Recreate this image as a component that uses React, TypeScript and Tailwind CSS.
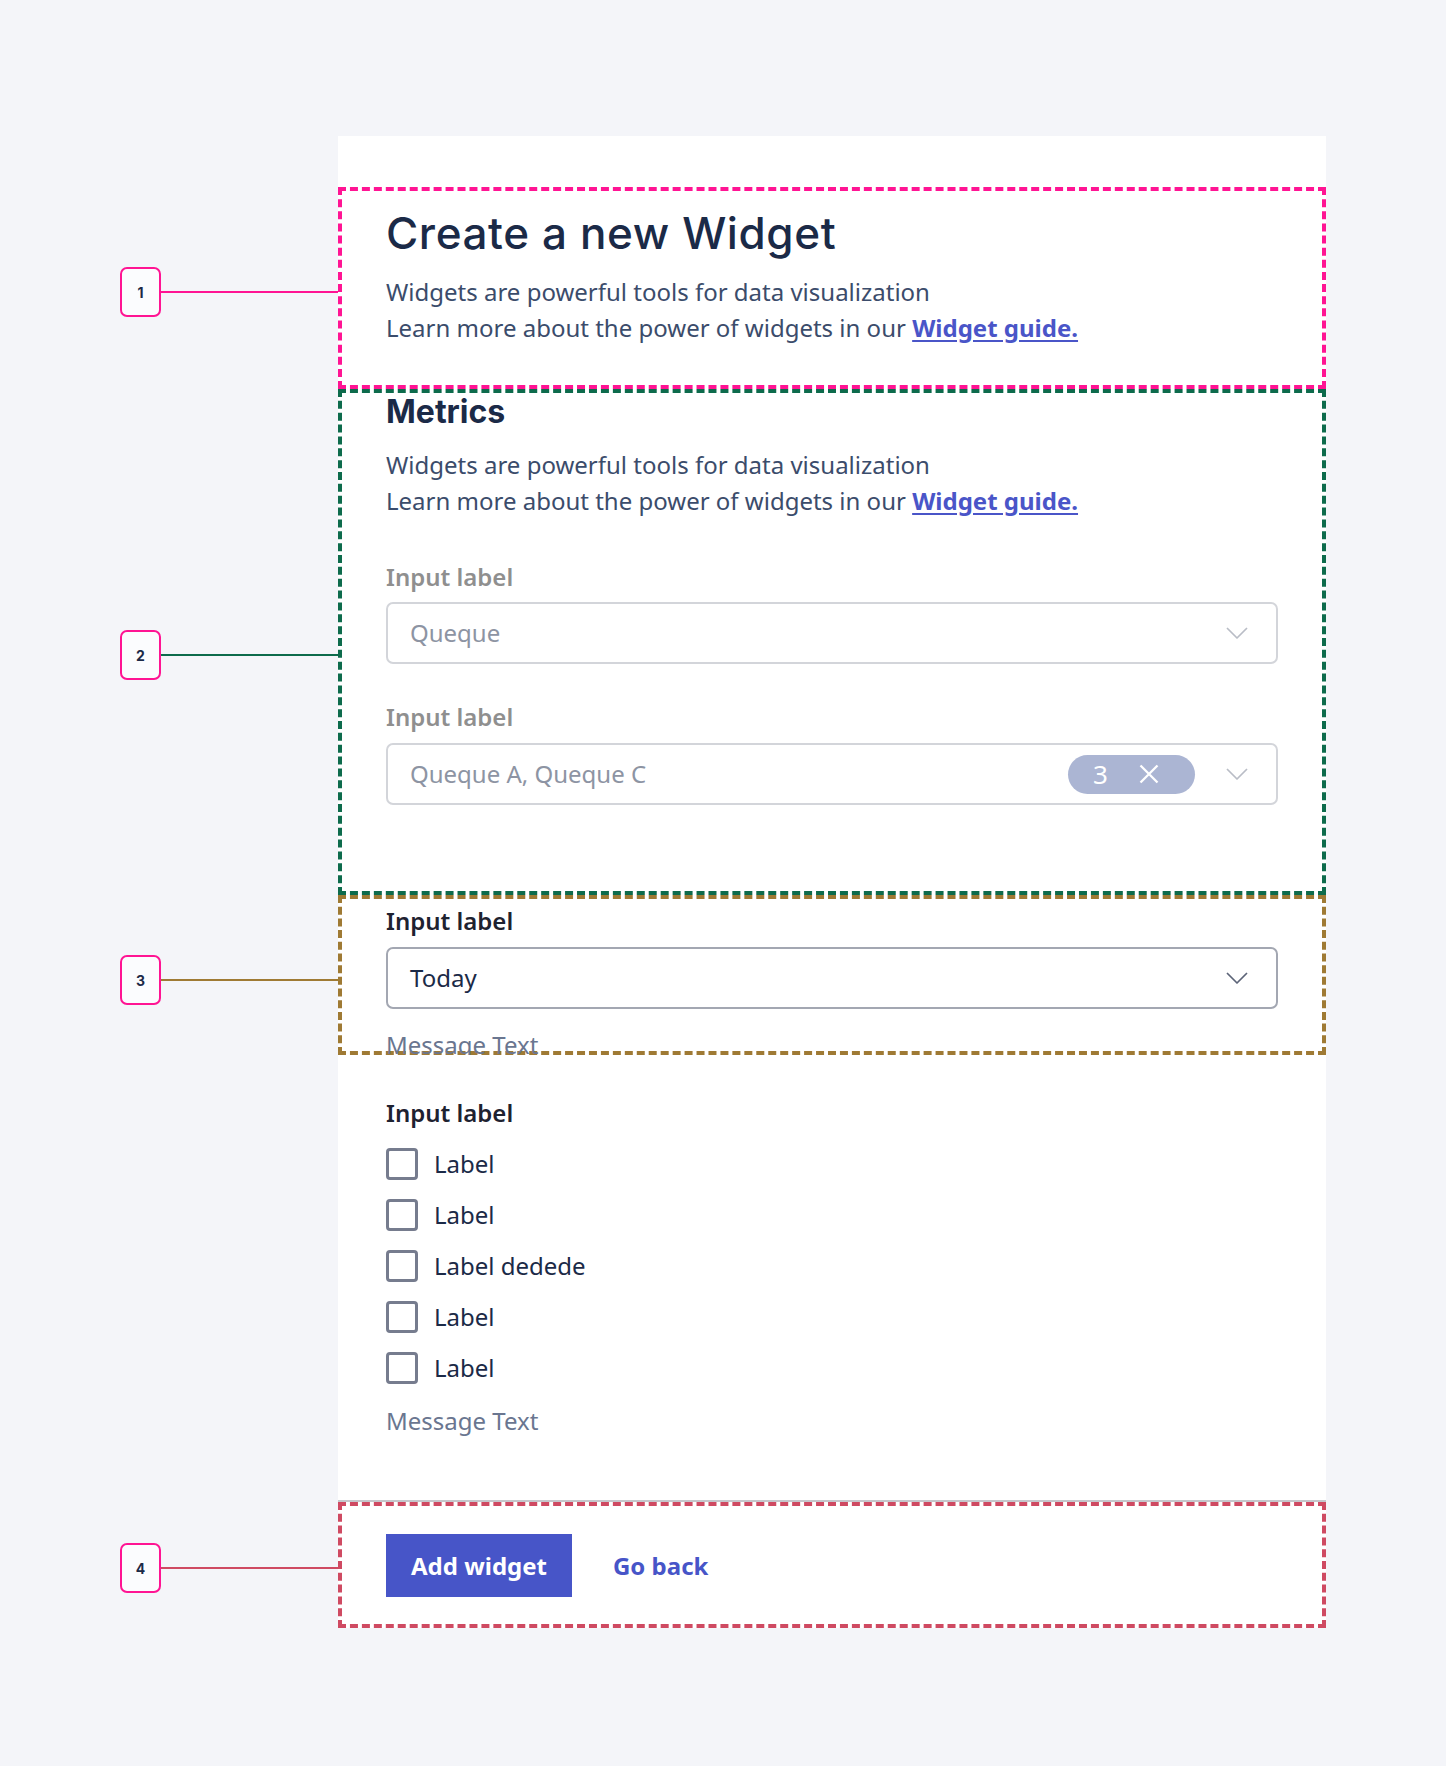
import type { ReactNode } from 'react';

function Chevron({ className }: { className: string }) {
    return (
        <svg width="22" height="12" viewBox="0 0 22 12" fill="none" className={className}>
            <path d="M1 1l10 10L21 1" stroke="currentColor" strokeWidth="1.7" strokeLinejoin="round" />
        </svg>
    );
}

function Callout({ n, line, offset }: { n: string; line: string; offset: string }) {
    return (
        <div className={`flex items-center w-full ${offset}`}>
            <div className="ml-[120px] w-[41px] h-[50px] shrink-0 rounded-[7px] border-2 border-[#ff1493] bg-[#fbfcfe] flex items-center justify-center font-['Inter',sans-serif] text-[14px] font-bold text-[#1b2a47]">
                {n}
            </div>
            <div className={`flex-1 h-[2px] ${line}`} />
        </div>
    );
}

function Row({ callout, children }: { callout?: ReactNode; children: ReactNode }) {
    return (
        <div className="flex">
            <div className="w-[338px] shrink-0 flex items-center">{callout}</div>
            <div className="w-[988px] shrink-0 bg-white">{children}</div>
        </div>
    );
}

function Intro() {
    return (
        <p className="text-[24px] leading-[36px] text-[#3b4c6b]">
            Widgets are powerful tools for data visualization
            <br />
            Learn more about the power of widgets in our{' '}
            <a href="#" className="font-bold text-[#4a55c8] underline underline-offset-[3px]">
                Widget guide.
            </a>
        </p>
    );
}

export default function App() {
    const boxes = ['Label', 'Label', 'Label dedede', 'Label', 'Label'];

    return (
        <main className="min-h-screen bg-[#f4f5f9] pt-[136px] pb-[138px] font-['Noto_Sans',sans-serif]">
            <Row>
                <div className="h-[51px]" />
            </Row>

            <Row callout={<Callout n="1" line="bg-[#ff1493]" offset="mt-[8px]" />}>
                <section className="border-4 border-dashed border-[#ff1493] px-[44px] pt-[16px] pb-[39px]">
                    <h1 className="font-['Inter',sans-serif] text-[44px] leading-[52px] font-medium text-[#1b2a47] tracking-[0.6px]">
                        Create a new Widget
                    </h1>
                    <div className="mt-[15px]">
                        <Intro />
                    </div>
                </section>
            </Row>

            <Row callout={<Callout n="2" line="bg-[#0d6b4c]" offset="mt-[26px]" />}>
                <section className="border-4 border-dashed border-[#0d6b4c] px-[44px] pt-[1px] pb-[86px]">
                    <h2 className="font-['Inter',sans-serif] text-[32px] leading-[36px] font-bold text-[#1b2a47]">
                        Metrics
                    </h2>
                    <div className="mt-[17px]">
                        <Intro />
                    </div>

                    <label className="block mt-[42px] text-[24px] leading-[32px] font-semibold text-[#8f8f8f]">Input label</label>
                    <div className="mt-[9px] h-[62px] rounded-[7px] border-2 border-[#d3d5da] flex items-center pl-[22px] pr-[28px]">
                        <span className="flex-1 text-[24px] text-[#8d94a3]">Queque</span>
                        <Chevron className="text-[#b9bdc6]" />
                    </div>

                    <label className="block mt-[37px] text-[24px] leading-[32px] font-semibold text-[#8f8f8f]">Input label</label>
                    <div className="mt-[10px] h-[62px] rounded-[7px] border-2 border-[#d3d5da] flex items-center pl-[22px] pr-[28px]">
                        <span className="flex-1 text-[24px] text-[#8d94a3]">Queque A, Queque C</span>
                        <span className="mr-[31px] h-[39px] w-[127px] rounded-full bg-[#abb5d3] flex items-center pl-[25px] gap-[31px] text-white">
                            <span className="text-[26px] leading-none">3</span>
                            <svg width="20" height="20" viewBox="0 0 20 20" fill="none">
                                <path d="M1.5 1.5l17 17M18.5 1.5l-17 17" stroke="currentColor" strokeWidth="2.3" />
                            </svg>
                        </span>
                        <Chevron className="text-[#b9bdc6]" />
                    </div>
                </section>
            </Row>

            <Row callout={<Callout n="3" line="bg-[#9f7a34]" offset="mt-[10px]" />}>
                <section className="h-[160px] border-4 border-dashed border-[#9f7a34] px-[44px] pt-[6px]">
                    <label className="block text-[24px] leading-[32px] font-semibold text-[#1e2230]">Input label</label>
                    <div className="mt-[10px] h-[62px] rounded-[7px] border-2 border-[#a3a7b2] flex items-center pl-[22px] pr-[28px]">
                        <span className="flex-1 text-[24px] text-[#1b2a47]">Today</span>
                        <Chevron className="text-[#5c6478]" />
                    </div>
                    <p className="mt-[20px] text-[24px] leading-[32px] text-[#6a7690]">Message Text</p>
                </section>
            </Row>

            <Row>
                <section className="px-[48px] pt-[42px] pb-[63px]">
                    <label className="block text-[24px] leading-[32px] font-semibold text-[#1e2230]">Input label</label>
                    <div className="mt-[17px] flex flex-col gap-[15px]">
                        {boxes.map((b, i) => (
                            <label key={i} className="h-[36px] flex items-center gap-[16px] cursor-pointer">
                                <span className="w-[32px] h-[32px] rounded-[4px] border-[3px] border-[#767c8e] bg-white" />
                                <span className="text-[24px] text-[#1b2a47]">{b}</span>
                            </label>
                        ))}
                    </div>
                    <p className="mt-[19px] text-[24px] leading-[32px] text-[#6a7690]">Message Text</p>
                </section>
                <div className="h-[2px] bg-[#c6c7cc]" />
            </Row>

            <Row callout={<Callout n="4" line="bg-[#cf4a62]" offset="mt-[6px]" />}>
                <section className="border-4 border-dashed border-[#cf4a62] px-[44px] pt-[28px] pb-[27px] flex items-center gap-[41px]">
                    <button className="h-[63px] px-[25px] bg-[#4755c8] text-white text-[24px] font-bold">Add widget</button>
                    <a href="#" className="text-[24px] font-bold text-[#4755c8]">Go back</a>
                </section>
            </Row>
        </main>
    );
}
